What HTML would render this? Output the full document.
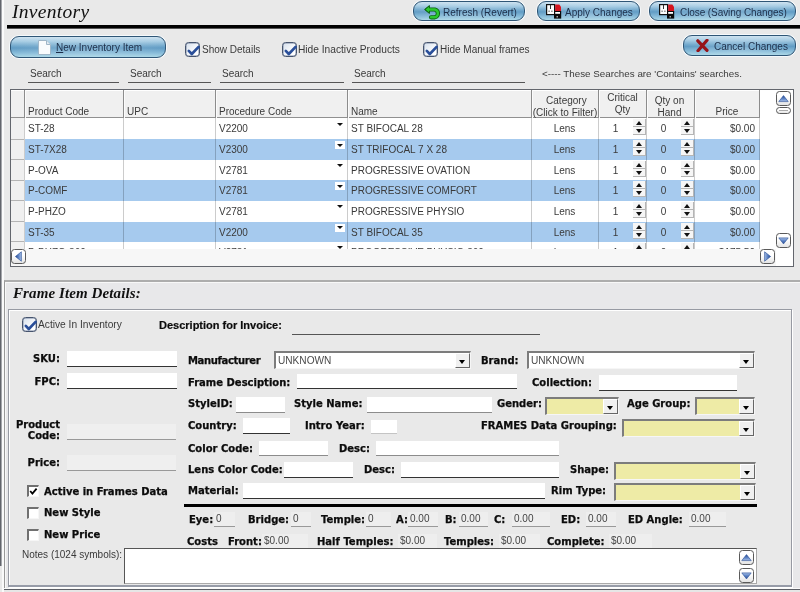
<!DOCTYPE html>
<html><head><meta charset="utf-8"><title>Inventory</title>
<style>
*{box-sizing:border-box;margin:0;padding:0}
html,body{width:800px;height:592px;overflow:hidden}
body{background:#e9e9e9;font-family:"Liberation Sans",sans-serif;font-size:10px;color:#2a2a2a;position:relative}
.a{position:absolute;white-space:nowrap}
i{font-style:normal}
.edgeL{left:0;top:0;width:2px;height:566px;background:linear-gradient(90deg,#62656c 0,#62656c 1px,#a4a6ab 1px)}
.edgeL2{left:2px;top:0;width:2px;height:592px;background:#fafafa}
.title{left:12px;top:-1.5px;font-family:"Liberation Serif",serif;font-style:italic;font-size:19.5px;letter-spacing:0.3px;color:#111;line-height:26px}
.rule{left:7px;top:25px;width:793px;height:4px;background:linear-gradient(#000 0,#000 3px,#555 3px)}
.btn{border:1px solid #2f5676;border-radius:9px;background:radial-gradient(ellipse 60% 70% at 50% 65%,rgba(255,255,255,.22),rgba(255,255,255,0) 100%),linear-gradient(#cfe3f0 0%,#a8cde4 22%,#6ea6cb 45%,#5b98c2 55%,#7fb6d6 78%,#a8d6e6 100%);color:#1d2f4a;font-size:10px;box-shadow:0 0 0 1px #f6f9fb}
.btn span{position:absolute;top:1px;white-space:nowrap}
.chk{width:15px;height:15px;border:1px solid #46546e;border-radius:3.5px;background:linear-gradient(135deg,#d5dfec,#fff 70%);box-shadow:inset 0 0 0 0.5px #7c8aa3}
.chk svg{position:absolute;left:0;top:0}
.lbl{font-size:10px;color:#3a3a3a;line-height:12px}
.sline{height:1px;background:#555}
.b{font-family:"DejaVu Sans","Liberation Sans",sans-serif;font-weight:bold;font-size:10px;color:#0c0c0c;line-height:12px;-webkit-text-stroke:0.25px #0c0c0c}
.t{font-family:"Liberation Sans",sans-serif;font-weight:bold;font-size:11px;color:#0c0c0c;line-height:12px;-webkit-text-stroke:0.2px #0c0c0c}
.inp{background:#fff;border-bottom:1px solid #333}
.inp.g{border-bottom-color:#8c8c8c}.inp.g2{border-bottom-color:#c4c4c4}
.unk{display:inline-block;font-size:11px;transform:scaleX(.92);transform-origin:0 50%;color:#4a4a4a;line-height:15px}
.ro{background:#efefef;border-bottom:1px solid #999}
.num{background:#eeeeee;border-bottom:1px solid #999;font-size:10px;color:#444;line-height:14px}
.cost{background:#eeeeee;font-size:10px;color:#444;line-height:14px}
.combo{background:#fff;border:1px solid #f6f6f6;border-top:2px solid #7c7c7c;border-left:2px solid #7c7c7c;font-size:10px;color:#444;line-height:14px}
.yel{background:#eeeba6}
.cb{position:absolute;right:0;top:0;bottom:0;width:15px;background:#f0f0f0;border:1px solid #fff;border-right-color:#666;border-bottom-color:#666}
.cb:after{content:"";position:absolute;left:3px;top:5.5px;border:3.5px solid transparent;border-top:4px solid #000;border-bottom:0}
.wchk{width:12px;height:12px;background:#fff;border:1px solid #f6f6f6;border-top:2px solid #707070;border-left:2px solid #707070}
/* grid */
.grid{background:#fff;border:1px solid #63666d;overflow:hidden}
.hdr{background:#f0f0f0;box-shadow:inset 0 1px 0 #fff}
.rw{background:#fff;overflow:hidden}
.rw.blue{background:#a6caee}
.c{top:5px;font-size:10px;color:#3a3a3a;line-height:12px}
.ht{font-size:10px;color:#3a3a3a;line-height:12px}
.hl{height:1px;background:#909090}
.vl{width:1px;background:rgba(0,0,0,.2)}.vh{width:1px;background:#8c8c8c;box-shadow:1px 0 0 #fbfbfb}
.dd{top:2px;width:10px;height:8px}.blue .dd{background:#fff}.dd:after{content:"";position:absolute;left:2px;top:2.5px;border:3px solid transparent;border-top:3.5px solid #111;border-bottom:0}
.sp{top:1px;width:13px;height:16px;background:#f6f6f6}
.sp i{position:absolute;left:0;width:13px;height:8px;border-right:1px solid #b5b5b5;border-bottom:1px solid #b5b5b5}
.sp .u{top:0}.sp .d{top:8px}
.sp .u:after{content:"";position:absolute;left:2.5px;top:2px;border:3.5px solid transparent;border-bottom:4px solid #111;border-top:0}
.sp .d:after{content:"";position:absolute;left:2.5px;top:2px;border:3.5px solid transparent;border-top:4px solid #111;border-bottom:0}
.hs{background:#f7f7f7}
.vs{background:#fff}
.sb{width:15px;height:15px;border:1px solid #5a5a5a;border-radius:3.5px;background:linear-gradient(#fff 40%,#e4e4e4)}
.sb svg{position:absolute;left:-1px;top:-1px}
</style></head><body>
<div id="w" style="position:absolute;left:0;top:0;width:800px;height:592px;will-change:transform">
<div class="a edgeL"></div><div class="a edgeL2"></div>
<div class="a title">Inventory</div>
<div class="a rule"></div>

<div class="a btn" style="left:413px;top:1px;width:112px;height:20px;line-height:19px"><svg class="a" style="left:9.5px;top:2.5px" width="16" height="15" viewBox="0 0 16 15"><path d="M4 4.5 H10.8 A4 4 0 0 1 10.8 12.3 H7" fill="none" stroke="#0c6410" stroke-width="4.2" stroke-linecap="round"/><path d="M0.6 4.5 L5.4 0.6 L5.4 8.4 Z" fill="#0c6410" stroke="#0c6410" stroke-width="1" stroke-linejoin="round"/><path d="M4 4.5 H10.8 A4 4 0 0 1 10.8 12.3 H7" fill="none" stroke="#2bc82e" stroke-width="2.4" stroke-linecap="round"/><path d="M1.6 4.5 L5 1.8 L5 7.2 Z" fill="#2bc82e"/></svg><span style="left:29px">Refresh (Revert)</span></div>
<div class="a btn" style="left:537px;top:1px;width:103px;height:20px;line-height:19px"><svg class="a" style="left:8px;top:2px" width="16" height="15" viewBox="0 0 16 15"><rect x="0.6" y="0.6" width="8" height="10" fill="#fdfdfd" stroke="#111" stroke-width="1.2"/><path d="M4.5 1 V5 M2.5 7.2 h1.2 M5.3 7.2 h1.2" stroke="#333" stroke-width="1"/><path d="M9.2 0.6 L13.4 0.6 L15 3 L15 7 L9.2 7 Z" fill="#d5151f"/><rect x="8" y="7" width="7.2" height="7.6" fill="#0a0a0a"/><rect x="9.2" y="8" width="4.8" height="1.8" fill="#fff"/><rect x="10.6" y="12.2" width="1.2" height="1.2" fill="#fff"/></svg><span style="left:27px">Apply Changes</span></div>
<div class="a btn" style="left:649px;top:1px;width:147px;height:20px;line-height:19px"><svg class="a" style="left:9px;top:2px" width="16" height="15" viewBox="0 0 16 15"><rect x="0.6" y="0.6" width="8" height="10" fill="#fdfdfd" stroke="#111" stroke-width="1.2"/><path d="M4.5 1 V5 M2.5 7.2 h1.2 M5.3 7.2 h1.2" stroke="#333" stroke-width="1"/><path d="M9.2 0.6 L13.4 0.6 L15 3 L15 7 L9.2 7 Z" fill="#d5151f"/><rect x="8" y="7" width="7.2" height="7.6" fill="#0a0a0a"/><rect x="9.2" y="8" width="4.8" height="1.8" fill="#fff"/><rect x="10.6" y="12.2" width="1.2" height="1.2" fill="#fff"/></svg><span style="left:30px;letter-spacing:-0.08px">Close (Saving Changes)</span></div>
<div class="a btn" style="left:10px;top:36px;width:156px;height:22px;line-height:20px"><svg class="a" style="left:27px;top:3px" width="13" height="15" viewBox="0 0 13 15"><path d="M0.5 0.5 H8.5 L12.5 4.5 V14.5 H0.5 Z" fill="#f8fbfd" stroke="#9fb6c8" stroke-width="1"/><path d="M8.5 0.5 V4.5 H12.5" fill="#dfe9f1" stroke="#9fb6c8" stroke-width="1"/></svg><span style="left:45px"><u>N</u>ew Inventory Item</span></div>
<div class="a btn" style="left:683px;top:35px;width:112.5px;height:21px;line-height:19px"><svg class="a" style="left:12px;top:3px" width="14" height="13" viewBox="0 0 14 13"><path d="M1.8 1.8 L11 11.3 M11 1.3 L2 11.8" fill="none" stroke="#96141a" stroke-width="3.2" stroke-linecap="round"/></svg><span style="left:30px">Cancel Changes</span></div>

<div class="a chk" style="left:185px;top:42px"><svg width="15" height="15" viewBox="0 0 15 15"><path d="M2.8 7.9 L5.8 11 L12.6 3.9" fill="none" stroke="#2a4f9a" stroke-width="2.7" stroke-linecap="round" stroke-linejoin="round"/></svg></div><div class="a lbl" style="left:202px;top:44px">Show Details</div>
<div class="a chk" style="left:282px;top:42px"><svg width="15" height="15" viewBox="0 0 15 15"><path d="M2.8 7.9 L5.8 11 L12.6 3.9" fill="none" stroke="#2a4f9a" stroke-width="2.7" stroke-linecap="round" stroke-linejoin="round"/></svg></div><div class="a lbl" style="left:298px;top:44px;font-size:10.2px">Hide Inactive Products</div>
<div class="a chk" style="left:423px;top:42px"><svg width="15" height="15" viewBox="0 0 15 15"><path d="M2.8 7.9 L5.8 11 L12.6 3.9" fill="none" stroke="#2a4f9a" stroke-width="2.7" stroke-linecap="round" stroke-linejoin="round"/></svg></div><div class="a lbl" style="left:440px;top:44px">Hide Manual frames</div>

<div class="a lbl" style="left:30px;top:68px">Search</div><div class="a sline" style="left:28px;top:82px;width:91px"></div>
<div class="a lbl" style="left:130px;top:68px">Search</div><div class="a sline" style="left:128px;top:82px;width:83px"></div>
<div class="a lbl" style="left:222px;top:68px">Search</div><div class="a sline" style="left:220px;top:82px;width:124px"></div>
<div class="a lbl" style="left:354px;top:68px">Search</div><div class="a sline" style="left:352px;top:82px;width:173px"></div>
<div class="a lbl" style="left:542px;top:68px;font-size:9.8px">&lt;---- These Searches are 'Contains' searches.</div>

<div class="a grid" style="left:10px;top:89px;width:784px;height:178px">
<div class="a hdr" style="left:0;top:0;width:749px;height:28px"></div>
<div class="a hdr" style="left:0;top:0;width:13px;height:159px"></div>
<div class="a rw" style="left:14px;top:28px;width:735px;height:21px">
<span class="a c" style="left:3px">ST-28</span>
<span class="a c" style="left:194px">V2200</span>
<span class="a dd" style="left:310px"></span>
<span class="a c" style="left:326px">ST BIFOCAL 28</span>
<span class="a c" style="left:506px;width:67px;text-align:center">Lens</span>
<span class="a c" style="left:574px;width:33px;text-align:center">1</span>
<span class="a sp" style="left:608px"><i class="u"></i><i class="d"></i></span>
<span class="a c" style="left:622px;width:33px;text-align:center">0</span>
<span class="a sp" style="left:656px"><i class="u"></i><i class="d"></i></span>
<span class="a c" style="left:670px;width:60px;text-align:right">$0.00</span>
</div>
<div class="a rw blue" style="left:14px;top:49px;width:735px;height:20.5px">
<span class="a c" style="left:3px">ST-7X28</span>
<span class="a c" style="left:194px">V2300</span>
<span class="a dd" style="left:310px"></span>
<span class="a c" style="left:326px">ST TRIFOCAL 7 X 28</span>
<span class="a c" style="left:506px;width:67px;text-align:center">Lens</span>
<span class="a c" style="left:574px;width:33px;text-align:center">1</span>
<span class="a sp" style="left:608px"><i class="u"></i><i class="d"></i></span>
<span class="a c" style="left:622px;width:33px;text-align:center">0</span>
<span class="a sp" style="left:656px"><i class="u"></i><i class="d"></i></span>
<span class="a c" style="left:670px;width:60px;text-align:right">$0.00</span>
</div>
<div class="a rw" style="left:14px;top:69.5px;width:735px;height:20.8px">
<span class="a c" style="left:3px">P-OVA</span>
<span class="a c" style="left:194px">V2781</span>
<span class="a dd" style="left:310px"></span>
<span class="a c" style="left:326px">PROGRESSIVE OVATION</span>
<span class="a c" style="left:506px;width:67px;text-align:center">Lens</span>
<span class="a c" style="left:574px;width:33px;text-align:center">1</span>
<span class="a sp" style="left:608px"><i class="u"></i><i class="d"></i></span>
<span class="a c" style="left:622px;width:33px;text-align:center">0</span>
<span class="a sp" style="left:656px"><i class="u"></i><i class="d"></i></span>
<span class="a c" style="left:670px;width:60px;text-align:right">$0.00</span>
</div>
<div class="a rw blue" style="left:14px;top:90.3px;width:735px;height:20.5px">
<span class="a c" style="left:3px">P-COMF</span>
<span class="a c" style="left:194px">V2781</span>
<span class="a dd" style="left:310px"></span>
<span class="a c" style="left:326px">PROGRESSIVE COMFORT</span>
<span class="a c" style="left:506px;width:67px;text-align:center">Lens</span>
<span class="a c" style="left:574px;width:33px;text-align:center">1</span>
<span class="a sp" style="left:608px"><i class="u"></i><i class="d"></i></span>
<span class="a c" style="left:622px;width:33px;text-align:center">0</span>
<span class="a sp" style="left:656px"><i class="u"></i><i class="d"></i></span>
<span class="a c" style="left:670px;width:60px;text-align:right">$0.00</span>
</div>
<div class="a rw" style="left:14px;top:110.8px;width:735px;height:20.7px">
<span class="a c" style="left:3px">P-PHZO</span>
<span class="a c" style="left:194px">V2781</span>
<span class="a dd" style="left:310px"></span>
<span class="a c" style="left:326px">PROGRESSIVE PHYSIO</span>
<span class="a c" style="left:506px;width:67px;text-align:center">Lens</span>
<span class="a c" style="left:574px;width:33px;text-align:center">1</span>
<span class="a sp" style="left:608px"><i class="u"></i><i class="d"></i></span>
<span class="a c" style="left:622px;width:33px;text-align:center">0</span>
<span class="a sp" style="left:656px"><i class="u"></i><i class="d"></i></span>
<span class="a c" style="left:670px;width:60px;text-align:right">$0.00</span>
</div>
<div class="a rw blue" style="left:14px;top:131.5px;width:735px;height:20.3px">
<span class="a c" style="left:3px">ST-35</span>
<span class="a c" style="left:194px">V2200</span>
<span class="a dd" style="left:310px"></span>
<span class="a c" style="left:326px">ST BIFOCAL 35</span>
<span class="a c" style="left:506px;width:67px;text-align:center">Lens</span>
<span class="a c" style="left:574px;width:33px;text-align:center">1</span>
<span class="a sp" style="left:608px"><i class="u"></i><i class="d"></i></span>
<span class="a c" style="left:622px;width:33px;text-align:center">0</span>
<span class="a sp" style="left:656px"><i class="u"></i><i class="d"></i></span>
<span class="a c" style="left:670px;width:60px;text-align:right">$0.00</span>
</div>
<div class="a rw" style="left:14px;top:151.8px;width:735px;height:7.2px">
<span class="a c" style="left:3px">P-PHZO-360</span>
<span class="a c" style="left:194px">V2781</span>
<span class="a dd" style="left:310px"></span>
<span class="a c" style="left:326px">PROGRESSIVE PHYSIO 360</span>
<span class="a c" style="left:506px;width:67px;text-align:center">Lens</span>
<span class="a c" style="left:574px;width:33px;text-align:center">1</span>
<span class="a sp" style="left:608px"><i class="u"></i><i class="d"></i></span>
<span class="a c" style="left:622px;width:33px;text-align:center">0</span>
<span class="a sp" style="left:656px"><i class="u"></i><i class="d"></i></span>
<span class="a c" style="left:670px;width:60px;text-align:right">$175.50</span>
</div>
<div class="a hl" style="left:0;top:27px;width:749px"></div>
<div class="a vl" style="left:13px;top:28px;height:131px"></div>
<div class="a vh" style="left:13px;top:0;height:28px"></div>
<div class="a vl" style="left:112px;top:28px;height:131px"></div>
<div class="a vh" style="left:112px;top:0;height:28px"></div>
<div class="a vl" style="left:204px;top:28px;height:131px"></div>
<div class="a vh" style="left:204px;top:0;height:28px"></div>
<div class="a vl" style="left:336px;top:28px;height:131px"></div>
<div class="a vh" style="left:336px;top:0;height:28px"></div>
<div class="a vl" style="left:520px;top:28px;height:131px"></div>
<div class="a vh" style="left:520px;top:0;height:28px"></div>
<div class="a vl" style="left:587px;top:28px;height:131px"></div>
<div class="a vh" style="left:587px;top:0;height:28px"></div>
<div class="a vl" style="left:635px;top:28px;height:131px"></div>
<div class="a vh" style="left:635px;top:0;height:28px"></div>
<div class="a vl" style="left:683px;top:28px;height:131px"></div>
<div class="a vh" style="left:683px;top:0;height:28px"></div>
<div class="a vl" style="left:748px;top:28px;height:131px"></div>
<div class="a vh" style="left:748px;top:0;height:28px"></div>
<div class="a" style="left:0;top:48.5px;width:13px;height:1px;background:#b4b4b4"></div>
<div class="a" style="left:0;top:69.0px;width:13px;height:1px;background:#b4b4b4"></div>
<div class="a" style="left:0;top:89.8px;width:13px;height:1px;background:#b4b4b4"></div>
<div class="a" style="left:0;top:110.3px;width:13px;height:1px;background:#b4b4b4"></div>
<div class="a" style="left:0;top:131.0px;width:13px;height:1px;background:#b4b4b4"></div>
<div class="a" style="left:0;top:151.3px;width:13px;height:1px;background:#b4b4b4"></div>
<div class="a ht" style="left:17px;top:16px;">Product Code</div>
<div class="a ht" style="left:116px;top:16px;">UPC</div>
<div class="a ht" style="left:208px;top:16px;">Procedure Code</div>
<div class="a ht" style="left:340px;top:16px;">Name</div>
<div class="a ht" style="left:521px;top:5px;width:66px;text-align:center">&nbsp;Category<br>(Click to Filter)</div>
<div class="a ht" style="left:588px;top:2px;width:47px;text-align:center">Critical<br>Qty</div>
<div class="a ht" style="left:635px;top:5px;width:47px;text-align:center">Qty on<br>Hand</div>
<div class="a ht" style="left:684px;top:16px;width:64px;text-align:center">Price</div>
<div class="a hs" style="left:0;top:159px;width:765px;height:17px"></div>
<div class="a sb" style="left:0px;top:159px"><svg width="15" height="15" viewBox="0 0 15 15"><defs><linearGradient id="gl" x1="0" y1="0" x2="1" y2="0"><stop offset="0" stop-color="#274a90"/><stop offset="0.55" stop-color="#5f86c8"/><stop offset="1" stop-color="#a9c0e6"/></linearGradient></defs><path d="M10.4 2.8 L4.4 7.5 L10.4 12.2 Z" fill="url(#gl)" stroke="#3a5da0" stroke-width="0.7" stroke-linejoin="round"/></svg></div>
<div class="a sb" style="left:749px;top:159px"><svg width="15" height="15" viewBox="0 0 15 15"><defs><linearGradient id="gr" x1="1" y1="0" x2="0" y2="0"><stop offset="0" stop-color="#274a90"/><stop offset="0.55" stop-color="#5f86c8"/><stop offset="1" stop-color="#a9c0e6"/></linearGradient></defs><path d="M4.6 2.8 L10.6 7.5 L4.6 12.2 Z" fill="url(#gr)" stroke="#3a5da0" stroke-width="0.7" stroke-linejoin="round"/></svg></div>
<div class="a vs" style="left:749px;top:0;width:33px;height:159px"></div>
<div class="a sb" style="left:765px;top:1px"><svg width="15" height="15" viewBox="0 0 15 15"><defs><linearGradient id="gu" x1="0" y1="0" x2="0" y2="1"><stop offset="0" stop-color="#274a90"/><stop offset="0.55" stop-color="#5f86c8"/><stop offset="1" stop-color="#a9c0e6"/></linearGradient></defs><path d="M2.8 10.6 L7.5 4.6 L12.2 10.6 Z" fill="url(#gu)" stroke="#3a5da0" stroke-width="0.7" stroke-linejoin="round"/></svg></div>
<div class="a sb" style="left:765px;top:17px;height:7px"><i style="position:absolute;left:2px;right:2px;top:2px;height:1px;background:#aaa"></i></div>
<div class="a sb" style="left:765px;top:143px"><svg width="15" height="15" viewBox="0 0 15 15"><defs><linearGradient id="gd" x1="0" y1="1" x2="0" y2="0"><stop offset="0" stop-color="#274a90"/><stop offset="0.55" stop-color="#5f86c8"/><stop offset="1" stop-color="#a9c0e6"/></linearGradient></defs><path d="M2.8 4.9 L7.5 10.9 L12.2 4.9 Z" fill="url(#gd)" stroke="#3a5da0" stroke-width="0.7" stroke-linejoin="round"/></svg></div>
</div>

<div class="a" style="left:4px;top:280px;width:800px;height:320px;border-left:1px solid #999;border-top:2px solid #adadad;background:#e8e8ea;box-shadow:inset 1px 1px 0 #f8f8f8"></div>
<div class="a" style="left:13px;top:284px;font-family:'Liberation Serif',serif;font-style:italic;font-weight:bold;font-size:15px;letter-spacing:0.1px;color:#111;line-height:18px">Frame Item Details:</div>
<div class="a" style="left:8px;top:309px;width:784px;height:278px;border:1px solid #979aa3;border-bottom:2px solid #979ca8;box-shadow:inset 1px 1px 0 #fff,1px 1px 0 #fff;background:#e9e9e9"></div>
<div class="a" style="left:4px;top:588px;width:796px;height:4px;background:#e6e6e6;border-top:1px solid #fafafa"></div><div class="a" style="left:4px;top:589px;width:796px;height:1px;background:#5c5f66"></div>

<div class="a chk" style="left:22px;top:317px"><svg width="15" height="15" viewBox="0 0 15 15"><path d="M2.8 7.9 L5.8 11 L12.6 3.9" fill="none" stroke="#2a4f9a" stroke-width="2.7" stroke-linecap="round" stroke-linejoin="round"/></svg></div>
<div class="a lbl" style="left:38px;top:319px;font-size:10.2px">Active In Inventory</div>
<div class="a t" style="left:159px;top:319px">Description for Invoice:</div>
<div class="a sline" style="left:292px;top:334px;width:248px"></div>
<div class="a b" style="right:740px;top:353px;text-align:right">SKU:</div>
<div class="a inp" style="left:67px;top:351px;width:110px;height:16px;padding-left:0px"></div>
<div class="a b" style="right:740px;top:376px;text-align:right">FPC:</div>
<div class="a inp" style="left:67px;top:373px;width:110px;height:16px;padding-left:0px"></div>
<div class="a b" style="right:740px;top:419px;text-align:right">Product</div>
<div class="a b" style="right:740px;top:430px;text-align:right">Code:</div>
<div class="a ro" style="left:67px;top:424px;width:109px;height:16px;padding-left:0px"></div>
<div class="a b" style="right:740px;top:457px;text-align:right">Price:</div>
<div class="a ro" style="left:67px;top:455px;width:109px;height:16px;padding-left:0px"></div>
<div class="a wchk" style="left:27px;top:485px"><svg width="9" height="9" viewBox="0 0 9 9" style="position:absolute;left:0;top:0"><path d="M1.2 4 L3.4 6.6 L7.6 1.6" fill="none" stroke="#000" stroke-width="1.8"/></svg></div>
<div class="a b" style="left:44px;top:486px">Active in Frames Data</div>
<div class="a wchk" style="left:27px;top:507px"></div>
<div class="a b" style="left:44px;top:507px">New Style</div>
<div class="a wchk" style="left:27px;top:529px"></div>
<div class="a b" style="left:44px;top:529px">New Price</div>
<div class="a lbl" style="left:22px;top:549px">Notes (1024 symbols):</div>
<div class="a b" style="left:188px;top:355px"><span style="letter-spacing:-0.35px">Manufacturer</span></div>
<div class="a combo" style="left:274px;top:351px;width:197px;height:18px;padding-left:2px"><span class="unk">UNKNOWN</span><i class="cb"></i></div>
<div class="a b" style="left:481px;top:355px">Brand:</div>
<div class="a combo" style="left:527px;top:351px;width:228px;height:18px;padding-left:2px"><span class="unk">UNKNOWN</span><i class="cb"></i></div>
<div class="a b" style="left:188px;top:377px">Frame Desciption:</div>
<div class="a inp" style="left:297px;top:374px;width:220px;height:15px;padding-left:0px"></div>
<div class="a b" style="left:532px;top:377px">Collection:</div>
<div class="a inp" style="left:599px;top:375px;width:138px;height:16px;padding-left:0px"></div>
<div class="a b" style="left:188px;top:398px">StyleID:</div>
<div class="a inp g" style="left:236px;top:397px;width:49px;height:16px;padding-left:0px"></div>
<div class="a b" style="left:294px;top:398px">Style Name:</div>
<div class="a inp g" style="left:367px;top:397px;width:125px;height:16px;padding-left:0px"></div>
<div class="a b" style="left:497px;top:398px">Gender:</div>
<div class="a combo yel" style="left:545px;top:397px;width:74px;height:18px;padding-left:2px"><i class="cb"></i></div>
<div class="a b" style="left:627px;top:398px">Age Group:</div>
<div class="a combo yel" style="left:695px;top:397px;width:60px;height:18px;padding-left:2px"><i class="cb"></i></div>
<div class="a b" style="left:188px;top:420px">Country:</div>
<div class="a inp" style="left:243px;top:418px;width:47px;height:16px;padding-left:0px"></div>
<div class="a b" style="left:305px;top:420px">Intro Year:</div>
<div class="a inp g2" style="left:371px;top:420px;width:26px;height:14px;padding-left:0px"></div>
<div class="a b" style="left:481px;top:420px">FRAMES Data Grouping:</div>
<div class="a combo yel" style="left:622px;top:419px;width:133px;height:18px;padding-left:2px"><i class="cb"></i></div>
<div class="a b" style="left:188px;top:443px">Color Code:</div>
<div class="a inp g" style="left:259px;top:441px;width:69px;height:15px;padding-left:0px"></div>
<div class="a b" style="left:339px;top:443px">Desc:</div>
<div class="a inp g" style="left:376px;top:441px;width:183px;height:15px;padding-left:0px"></div>
<div class="a b" style="left:188px;top:464px">Lens Color Code:</div>
<div class="a inp" style="left:284px;top:462px;width:69px;height:16px;padding-left:0px"></div>
<div class="a b" style="left:364px;top:464px">Desc:</div>
<div class="a inp" style="left:401px;top:462px;width:158px;height:16px;padding-left:0px"></div>
<div class="a b" style="left:570px;top:464px">Shape:</div>
<div class="a combo yel" style="left:614px;top:462px;width:142px;height:18px;padding-left:2px"><i class="cb"></i></div>
<div class="a b" style="left:188px;top:485px">Material:</div>
<div class="a inp" style="left:243px;top:483px;width:302px;height:16px;padding-left:0px"></div>
<div class="a b" style="left:551px;top:485px">Rim Type:</div>
<div class="a combo yel" style="left:614px;top:483px;width:142px;height:18px;padding-left:2px"><i class="cb"></i></div>
<div class="a" style="left:184px;top:504px;width:573px;height:2.6px;background:#000"></div>
<div class="a b" style="left:189px;top:514px">Eye:</div>
<div class="a num" style="left:214px;top:512px;width:21px;height:15px;padding-left:2px">0</div>
<div class="a b" style="left:248px;top:514px">Bridge:</div>
<div class="a num" style="left:291px;top:512px;width:20px;height:15px;padding-left:2px">0</div>
<div class="a b" style="left:321px;top:514px">Temple:</div>
<div class="a num" style="left:366px;top:512px;width:25px;height:15px;padding-left:2px">0</div>
<div class="a b" style="left:396px;top:514px">A:</div>
<div class="a num" style="left:408px;top:512px;width:30px;height:15px;padding-left:2px">0.00</div>
<div class="a b" style="left:445px;top:514px">B:</div>
<div class="a num" style="left:459px;top:512px;width:29px;height:15px;padding-left:2px">0.00</div>
<div class="a b" style="left:494px;top:514px">C:</div>
<div class="a num" style="left:512px;top:512px;width:38px;height:15px;padding-left:2px">0.00</div>
<div class="a b" style="left:561px;top:514px">ED:</div>
<div class="a num" style="left:586px;top:512px;width:30px;height:15px;padding-left:2px">0.00</div>
<div class="a b" style="left:628px;top:514px">ED Angle:</div>
<div class="a num" style="left:689px;top:512px;width:37px;height:15px;padding-left:2px">0.00</div>
<div class="a b" style="left:187px;top:536px">Costs</div>
<div class="a b" style="left:228px;top:536px">Front:</div>
<div class="a cost" style="left:262px;top:534px;width:46px;height:15px;padding-left:2px">$0.00</div>
<div class="a b" style="left:317px;top:536px">Half Temples:</div>
<div class="a cost" style="left:398px;top:534px;width:39px;height:15px;padding-left:2px">$0.00</div>
<div class="a b" style="left:444px;top:536px">Temples:</div>
<div class="a cost" style="left:499px;top:534px;width:41px;height:15px;padding-left:2px">$0.00</div>
<div class="a b" style="left:547px;top:536px">Complete:</div>
<div class="a cost" style="left:609px;top:534px;width:43px;height:15px;padding-left:2px">$0.00</div>
<div class="a" style="left:124px;top:548px;width:633px;height:36px;background:#fff;border:1px solid #555;border-bottom-color:#aaa;border-right-color:#aaa"></div>
<div class="a sb" style="left:739px;top:550px"><svg width="15" height="15" viewBox="0 0 15 15"><defs><linearGradient id="gu" x1="0" y1="0" x2="0" y2="1"><stop offset="0" stop-color="#274a90"/><stop offset="0.55" stop-color="#5f86c8"/><stop offset="1" stop-color="#a9c0e6"/></linearGradient></defs><path d="M2.8 10.6 L7.5 4.6 L12.2 10.6 Z" fill="url(#gu)" stroke="#3a5da0" stroke-width="0.7" stroke-linejoin="round"/></svg></div>
<div class="a sb" style="left:739px;top:568px"><svg width="15" height="15" viewBox="0 0 15 15"><defs><linearGradient id="gd" x1="0" y1="1" x2="0" y2="0"><stop offset="0" stop-color="#274a90"/><stop offset="0.55" stop-color="#5f86c8"/><stop offset="1" stop-color="#a9c0e6"/></linearGradient></defs><path d="M2.8 4.9 L7.5 10.9 L12.2 4.9 Z" fill="url(#gd)" stroke="#3a5da0" stroke-width="0.7" stroke-linejoin="round"/></svg></div>
</div>
</body></html>
